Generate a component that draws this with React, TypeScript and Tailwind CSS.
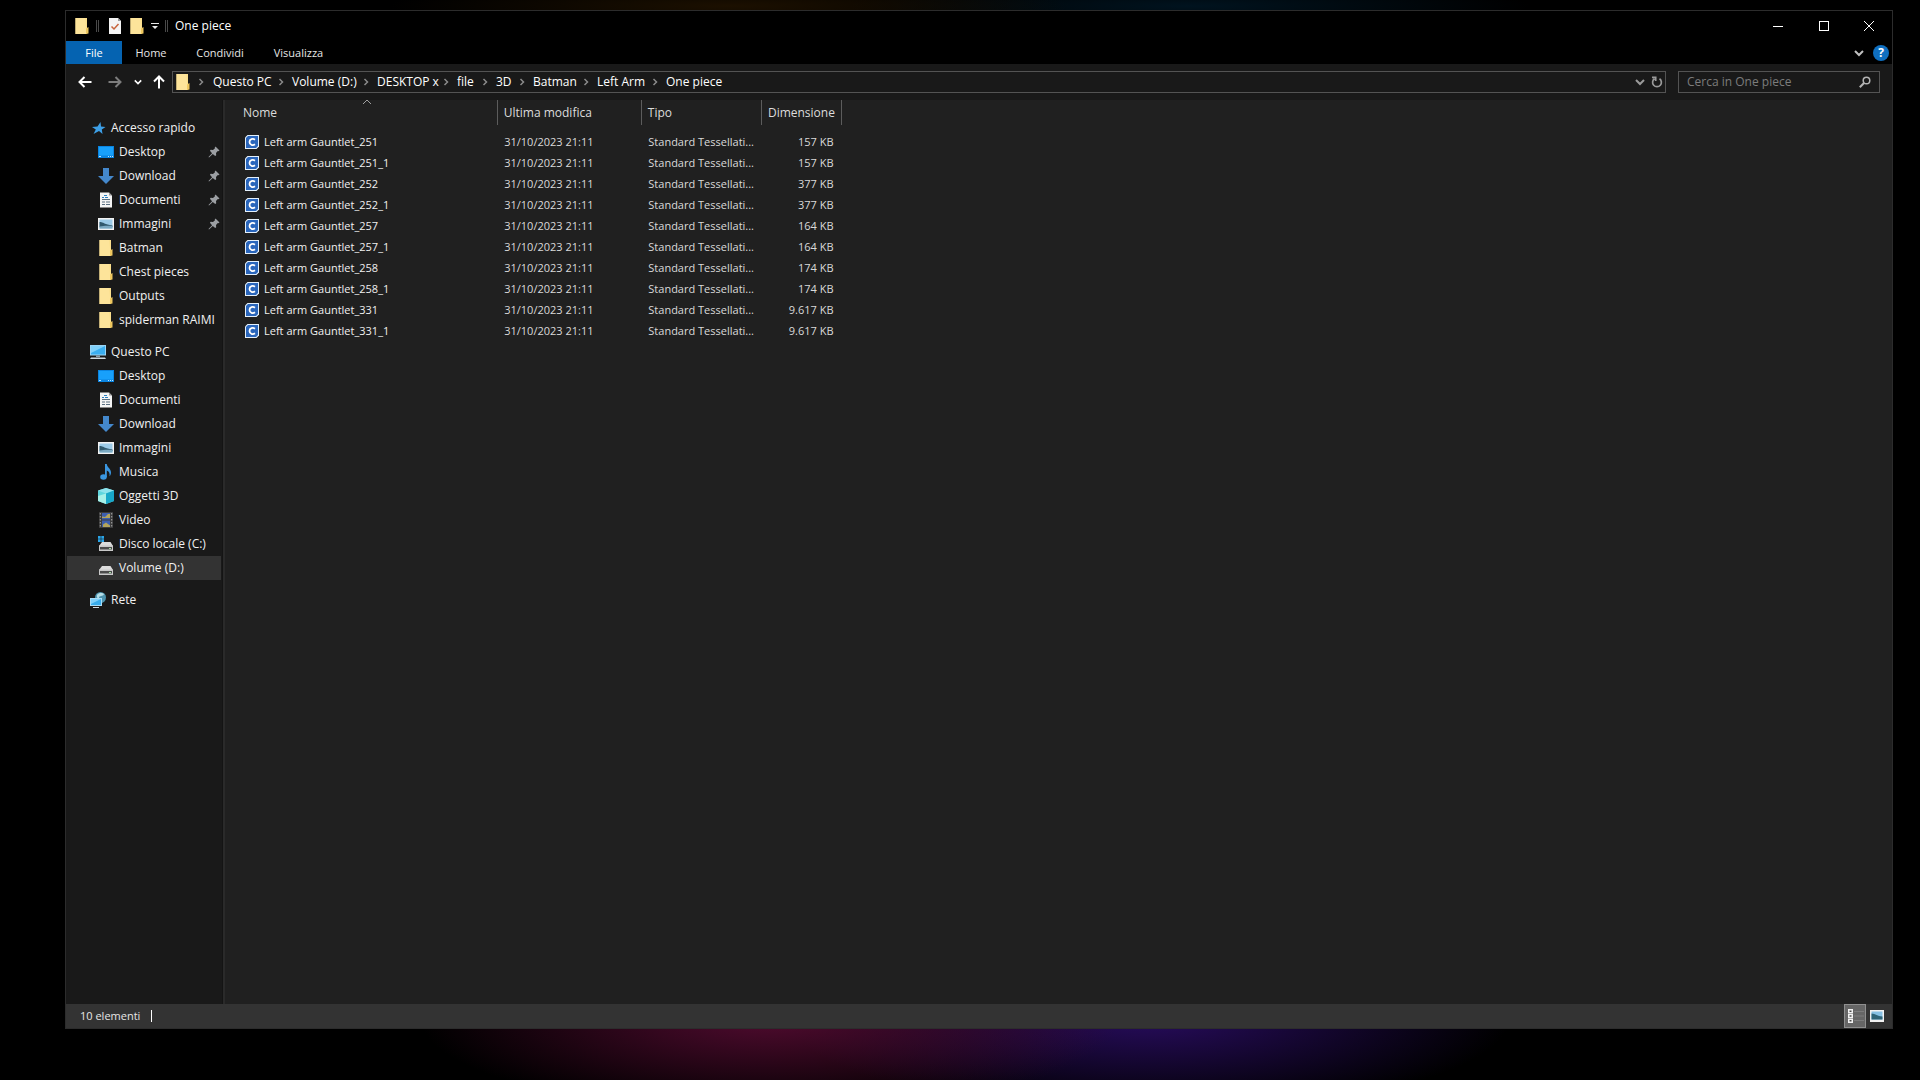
import type { ReactNode } from 'react'

type IconName =
  | 'star' | 'desktop' | 'download' | 'document' | 'picture' | 'folder' | 'pc'
  | 'music' | 'cube' | 'video' | 'diskC' | 'disk' | 'network'

interface NavItem {
  label: string
  icon: IconName
  pinned?: boolean
  selected?: boolean
}

interface NavGroup {
  title: string
  icon: IconName
  items: NavItem[]
}

const NAV: NavGroup[] = [
  {
    title: 'Accesso rapido',
    icon: 'star',
    items: [
      { label: 'Desktop', icon: 'desktop', pinned: true },
      { label: 'Download', icon: 'download', pinned: true },
      { label: 'Documenti', icon: 'document', pinned: true },
      { label: 'Immagini', icon: 'picture', pinned: true },
      { label: 'Batman', icon: 'folder' },
      { label: 'Chest pieces', icon: 'folder' },
      { label: 'Outputs', icon: 'folder' },
      { label: 'spiderman RAIMI', icon: 'folder' },
    ],
  },
  {
    title: 'Questo PC',
    icon: 'pc',
    items: [
      { label: 'Desktop', icon: 'desktop' },
      { label: 'Documenti', icon: 'document' },
      { label: 'Download', icon: 'download' },
      { label: 'Immagini', icon: 'picture' },
      { label: 'Musica', icon: 'music' },
      { label: 'Oggetti 3D', icon: 'cube' },
      { label: 'Video', icon: 'video' },
      { label: 'Disco locale (C:)', icon: 'diskC' },
      { label: 'Volume (D:)', icon: 'disk', selected: true },
    ],
  },
  { title: 'Rete', icon: 'network', items: [] },
]

const FILES = [
  { name: 'Left arm Gauntlet_251', size: '157 KB' },
  { name: 'Left arm Gauntlet_251_1', size: '157 KB' },
  { name: 'Left arm Gauntlet_252', size: '377 KB' },
  { name: 'Left arm Gauntlet_252_1', size: '377 KB' },
  { name: 'Left arm Gauntlet_257', size: '164 KB' },
  { name: 'Left arm Gauntlet_257_1', size: '164 KB' },
  { name: 'Left arm Gauntlet_258', size: '174 KB' },
  { name: 'Left arm Gauntlet_258_1', size: '174 KB' },
  { name: 'Left arm Gauntlet_331', size: '9.617 KB' },
  { name: 'Left arm Gauntlet_331_1', size: '9.617 KB' },
]

const CRUMBS = [
  { label: 'Questo PC', width: 'w-[79px]' },
  { label: 'Volume (D:)', width: 'w-[85px]' },
  { label: 'DESKTOP x', width: 'w-[80px]' },
  { label: 'file', width: 'w-[39px]' },
  { label: '3D', width: 'w-[37px]' },
  { label: 'Batman', width: 'w-[64px]' },
  { label: 'Left Arm', width: 'w-[69px]' },
  { label: 'One piece', width: 'w-[70px]' },
]

const ICONS: Record<IconName, ReactNode> = {
  star: (
    <path d="M10.500 2 11 6.500 15.500 7 11.800 9.500 12.500 14 9 11 3.500 14 5.800 9.500 2 7 7.500 6.500Z" fill="#3d9fe6" />
  ),
  desktop: (
    <>
      <path d="M0 2h16v12H0z" fill="#0a84e0" />
      <path d="M1 3h14v8.500H1z" fill="#18a0fb" />
      <path d="M1 12h2v1H1zM10 12h1v1h-1zM12 12h1v1h-1zM14 12h1v1h-1z" fill="#bfe4ff" />
    </>
  ),
  download: <path d="M5 0h6v8h5l-8 8-8-8h5z" fill="#4488cc" />,
  document: (
    <>
      <path d="M2 .5h9l3 3V15.500H2z" fill="#f4f4f4" />
      <path d="M11 .5v3h3z" fill="#9a9a9a" />
      <path d="M4 7h8v1H4zM4 9.500h3v1H4zM8 9.500h4v1H8zM4 12h3v1H4zM8 12h4v1H8z" fill="#5a6f80" />
      <path d="M6 3h3v1H6zM4 5h2v1H4zM7 5h3v1H7z" fill="#2b7fc0" />
    </>
  ),
  picture: (
    <>
      <path d="M0 2h16v12H0z" fill="#f2f2f2" />
      <path d="M1.500 3.500h13v9h-13z" fill="#9ccbe8" />
      <path d="M1.500 6c4 0 5 2.500 13 3.500v1.500h-13z" fill="#31596d" />
      <path d="M1.500 10.500c5-1 8-1 13-.5v2.500h-13z" fill="#7ba9c2" />
    </>
  ),
  folder: (
    <>
      <path d="M1.500 0h11.500v16H1.500z" fill="#fbdf8c" />
      <path d="M1.500 0h9.500L13 16H1.500z" fill="#fde49a" />
      <path d="M12 10.500 14.500 9v6.500L12 16z" fill="#eec75f" />
    </>
  ),
  pc: (
    <>
      <path d="M0 1h16v10.500H0z" fill="#9ad4f5" />
      <path d="M1 2h14v8.500H1z" fill="#3aaef0" />
      <path d="M1 2h14L1 9z" fill="#7fd0fa" />
      <path d="M6 11.500h4v1.500H6z" fill="#8aa0ad" />
      <path d="M1 13.500h14l1 1.500H0z" fill="#cfdbe2" />
    </>
  ),
  music: (
    <>
      <ellipse cx="5.500" cy="13" rx="3.300" ry="2.700" fill="#3a96e0" />
      <path d="M7 0h1.800c.2 3.500 4.200 4.500 4.200 8.500 0 1.400-.5 2.600-1.500 3.800.6-3-.6-5-2.700-5.800V13H7z" fill="#3a96e0" />
    </>
  ),
  cube: (
    <>
      <path d="M8 0 16 2.500V13L8 16 0 13V2.500z" fill="#5fd6de" />
      <path d="M8 0 16 2.500 8 5.500 0 2.500z" fill="#8fe2ec" />
      <path d="M0 13V8l8-2.500V16z" fill="#a8f0e8" />
      <path d="M16 2.500 8 5.500V16l8-3z" fill="#18a7c8" />
    </>
  ),
  video: (
    <>
      <path d="M1 0h14v16H1z" fill="#3c3c3c" />
      <path d="M4 1h8v6.500H4zM4 8.500h8V15H4z" fill="#3d5fb0" />
      <path d="M4 4.500 7 5l3-3h2v4H4zM5 12.500l3-2 4 3V15H5z" fill="#b3a45c" />
      <path d="M1.800 1h1v1.500h-1zM1.800 4h1v1.500h-1zM1.800 7h1v1.500h-1zM1.800 10h1v1.500h-1zM1.800 13h1v1.500h-1zM13.200 1h1v1.500h-1zM13.200 4h1v1.500h-1zM13.200 7h1v1.500h-1zM13.200 10h1v1.500h-1zM13.200 13h1v1.500h-1z" fill="#a8a8a8" />
    </>
  ),
  diskC: (
    <>
      <path d="M0 0h2.700v2.700H0zM3.300 0H6v2.700H3.300zM0 3.300h2.700V6H0zM3.300 3.300H6V6H3.300z" fill="#2aa5e8" />
      <path d="M4 6h8.500L15 10H1z" fill="#dcdcdc" />
      <path d="M1 9.500h14V15H1z" fill="#c9c9c9" />
      <path d="M2 11h12v2.500H2z" fill="#4c4c4c" />
      <path d="M11 12h2v1h-2z" fill="#a5dca5" />
    </>
  ),
  disk: (
    <>
      <path d="M4 6h8.500L15 10H1z" fill="#dcdcdc" />
      <path d="M1 9.500h14V15H1z" fill="#c9c9c9" />
      <path d="M2 11h12v2.500H2z" fill="#4c4c4c" />
      <path d="M11 12h2v1h-2z" fill="#a5dca5" />
    </>
  ),
  network: (
    <>
      <circle cx="10.500" cy="5.500" r="5.500" fill="#4d93ad" />
      <path d="M7 3c2-3 6-2 7-1-1 3-5 1-5 4-1 1-3-1-2-3z" fill="#b5dde6" />
      <path d="M0 6h12v8H0z" fill="#a9dcf7" />
      <path d="M1 7h10v6H1z" fill="#38acec" />
      <path d="M1 7h10L1 12z" fill="#7fd0fa" />
      <path d="M3 15h6v1H3z" fill="#cfdbe2" />
    </>
  ),
}

function Icon({ name }: { name: IconName }) {
  return (
    <svg viewBox="0 0 16 16" className="size-4 shrink-0" aria-hidden="true">
      {ICONS[name]}
    </svg>
  )
}

function Chevron({ dir, className }: { dir: 'up' | 'down' | 'right'; className: string }) {
  const paths = { up: 'M1 7 5 3 9 7', down: 'M1 3 5 7 9 3', right: 'M3.500 2 6.500 5 3.500 8' }
  return (
    <svg viewBox="0 0 10 10" className={className} fill="none" stroke="currentColor" aria-hidden="true">
      <path d={paths[dir]} />
    </svg>
  )
}

function Arrow({ className }: { className: string }) {
  return (
    <svg viewBox="0 0 14 14" className={className} fill="none" stroke="currentColor" strokeWidth="2" aria-hidden="true">
      <path d="M13.500 7H1.500M6.500 2 1.500 7l5 5" />
    </svg>
  )
}

function TitleBar() {
  return (
    <header className="flex h-[30px] items-center bg-black pl-2">
      <Icon name="folder" />
      <span className="ml-[6px] h-3 w-[3px] border-x border-[#4a4a4a]" />
      <button aria-label="Proprietà" className="ml-2">
        <svg viewBox="0 0 16 16" className="size-4" aria-hidden="true">
          <path d="M2 0h9l3 3v13H2z" fill="#f4f4f4" />
          <path d="M11 0v3h3z" fill="#9b9b9b" />
          <path d="m4.500 8.500 2.500 2.500 4.500-5" fill="none" stroke="#c8643c" strokeWidth="1.500" />
        </svg>
      </button>
      <button aria-label="Nuova cartella" className="ml-[6px]">
        <Icon name="folder" />
      </button>
      <button aria-label="Personalizza barra" className="ml-[6px]">
        <svg viewBox="0 0 8 8" className="size-2" fill="#e8e8e8" aria-hidden="true">
          <path d="M0 1h8v1H0zM1 4h6L4 7z" />
        </svg>
      </button>
      <span className="ml-[6px] h-3 w-[3px] border-x border-[#4a4a4a]" />
      <h1 className="ml-[7px] text-white">One piece</h1>
      <div className="ml-auto flex text-white">
        <button aria-label="Riduci a icona" className="flex h-[30px] w-[46px] items-center justify-center">
          <span className="h-px w-[10px] bg-white" />
        </button>
        <button aria-label="Ingrandisci" className="flex h-[30px] w-[45px] items-center justify-center">
          <span className="size-[10px] border border-white" />
        </button>
        <button aria-label="Chiudi" className="flex h-[30px] w-[46px] items-center justify-center">
          <svg viewBox="0 0 10 10" className="size-[10px]" stroke="white" aria-hidden="true">
            <path d="M0 0 10 10M10 0 0 10" />
          </svg>
        </button>
      </div>
    </header>
  )
}

function Ribbon() {
  return (
    <div className="flex h-[23px] items-center bg-black text-[11px] text-[#e6e6e6]">
      <button className="h-full w-14 bg-[#0563b1] text-white">File</button>
      <button className="w-[58px]">Home</button>
      <button className="w-20">Condividi</button>
      <button className="w-[77px]">Visualizza</button>
      <button aria-label="Espandi barra multifunzione" className="ml-auto text-[#c0c0c0]">
        <Chevron dir="down" className="size-[10px] stroke-2" />
      </button>
      <button
        aria-label="Guida"
        className="mr-[3px] ml-[9px] flex size-4 items-center justify-center rounded-full bg-[#0f6fc0] text-[12px] font-bold text-white"
      >
        ?
      </button>
    </div>
  )
}

function AddressRow() {
  return (
    <div className="flex h-9 items-center pr-3 pl-3 text-white">
      <button aria-label="Indietro"><Arrow className="size-[14px]" /></button>
      <button aria-label="Avanti" className="ml-4 text-[#7d7d7d]"><Arrow className="size-[14px] rotate-180" /></button>
      <button aria-label="Percorsi recenti" className="ml-3"><Chevron dir="down" className="size-2 stroke-2" /></button>
      <button aria-label="Su" className="ml-[10px]"><Arrow className="size-[14px] rotate-90" /></button>
      <nav aria-label="Percorso" className="ml-[6px] flex h-[22px] flex-1 items-center border border-[#535353] pl-[2px]">
        <Icon name="folder" />
        <Chevron dir="right" className="mx-[5px] size-[10px] stroke-[#8a8a8a] stroke-[1.500]" />
        <ol className="flex pl-[2px]">
          {CRUMBS.map((crumb, i) => (
            <li key={crumb.label} className={`flex items-center justify-between whitespace-nowrap ${crumb.width}`}>
              <a href="#" className="text-white">{crumb.label}</a>
              {i < CRUMBS.length - 1 && (
                <Chevron dir="right" className="mr-[6px] size-[10px] stroke-[#8a8a8a] stroke-[1.500]" />
              )}
            </li>
          ))}
        </ol>
        <button aria-label="Posizioni precedenti" className="ml-auto text-[#9a9a9a]">
          <Chevron dir="down" className="size-[10px] stroke-2" />
        </button>
        <button aria-label="Aggiorna" className="mr-[2px] ml-[6px] text-[#9a9a9a]">
          <svg viewBox="0 0 12 12" className="size-3" fill="none" stroke="currentColor" strokeWidth="1.700" aria-hidden="true">
            <path d="M8.500 2.700A4.400 4.400 0 1 1 3.500 2.700M1 1.300h3.700V5" />
          </svg>
        </button>
      </nav>
      <label className="ml-3 flex h-[22px] w-[202px] items-center border border-[#535353] pr-2 pl-2">
        <input
          type="search"
          aria-label="Cerca in One piece"
          placeholder="Cerca in One piece"
          className="min-w-0 flex-1 bg-transparent outline-none placeholder:text-[#7c7c7c]"
        />
        <svg viewBox="0 0 12 12" className="size-3" fill="none" stroke="#b4b4b4" strokeWidth="1.500" aria-hidden="true">
          <circle cx="7.500" cy="4.500" r="3.300" />
          <path d="M5 7 .8 11.200" strokeWidth="2" />
        </svg>
      </label>
    </div>
  )
}

function Pin() {
  return (
    <svg viewBox="0 0 12 12" className="mr-px ml-auto size-3 shrink-0" aria-hidden="true">
      <path d="M7.500.5 11.500 4.500 10.300 5.300 9.800 5 8 7l.2 2.300-1 .8L4.800 7.900 1 11.500.5 11 4.100 7.200 1.900 4.800l.8-1L5 4l2-1.800-.3-.5z" fill="#9c9fa3" />
    </svg>
  )
}

function Sidebar() {
  return (
    <aside className="w-[157px] shrink-0 border-r border-[#141414] pt-4 pr-px pl-px">
      {NAV.map((group) => (
        <section key={group.title} className="mb-2">
          <a href="#" className="flex h-6 items-center gap-[5px] pl-[23px]">
            <Icon name={group.icon} />
            {group.title}
          </a>
          <ul>
            {group.items.map((item) => (
              <li key={item.label}>
                <a
                  href="#"
                  className={`flex h-6 items-center gap-[5px] pl-[31px] whitespace-nowrap ${item.selected ? 'bg-[#333333]' : ''}`}
                >
                  <Icon name={item.icon} />
                  {item.label}
                  {item.pinned && <Pin />}
                </a>
              </li>
            ))}
          </ul>
        </section>
      ))}
    </aside>
  )
}

function FileIcon() {
  return (
    <svg viewBox="0 0 14 14" className="size-[14px] shrink-0" aria-hidden="true">
      <path d="M2.500 0H14v11.500L11.500 14H0V2.500z" fill="#e4f0fb" />
      <path d="M3 1H13v10L11 13H1V3z" fill="#2a66bc" />
      <path d="M10 4.700C8 3.300 4.500 3.700 4.500 7S8 10.700 10 9.300" fill="none" stroke="#fff" strokeWidth="1.800" />
    </svg>
  )
}

function FileTable() {
  return (
    <table className="w-[617px] table-fixed border-collapse text-left">
      <colgroup>
        <col className="w-[272px]" />
        <col className="w-36" />
        <col className="w-[120px]" />
        <col className="w-20" />
      </colgroup>
      <thead>
        <tr className="h-[25px] text-[#dcdcdc]">
          <th className="relative border-r border-[#5c5c5c] p-0 pl-[18px] font-normal">
            Nome
            <Chevron dir="up" className="absolute -top-[3px] left-[137px] size-[10px] text-[#a0a0a0]" />
          </th>
          <th className="border-r border-[#5c5c5c] p-0 pl-[6px] font-normal">Ultima modifica</th>
          <th className="border-r border-[#5c5c5c] p-0 pl-[6px] font-normal">Tipo</th>
          <th className="border-r border-[#5c5c5c] p-0 pl-[6px] font-normal">Dimensione</th>
        </tr>
      </thead>
      <tbody className="text-[11px] before:block before:h-[6px]">
        {FILES.map((file) => (
          <tr key={file.name} className="h-[21px] whitespace-nowrap text-[#dadada]">
            <td className="p-0 pl-5">
              <a href="#" className="flex items-center gap-[5px] text-[#f0f0f0]">
                <FileIcon />
                {file.name}
              </a>
            </td>
            <td className="p-0 pl-[7px]">31/10/2023 21:11</td>
            <td className="p-0 pl-[7px]">Standard Tessellati...</td>
            <td className="p-0 pr-2 text-right">{file.size}</td>
          </tr>
        ))}
      </tbody>
    </table>
  )
}

function StatusBar() {
  return (
    <footer className="flex h-6 items-center bg-[#333333] pr-2 pl-[14px] text-[#e6e6e6]">
      <span className="text-[11px]">10 elementi</span>
      <span className="ml-[11px] h-3 w-px bg-white" />
      <button aria-label="Dettagli" className="ml-auto flex h-6 w-[22px] items-center border border-[#8f8f8f] bg-[#666666] pl-[3px]">
        <svg viewBox="0 0 16 14" className="h-[14px] w-4" aria-hidden="true">
          <path d="M0 0h5v4.300H0zM0 4.800h5v4.300H0zM0 9.600h5V14H0z" fill="#f2f2f2" />
          <path d="M1.500 1.500h2v1.500h-2zM1.500 6.200h2v1.500h-2zM1.500 11h2v1.500h-2z" fill="#4a4a4a" />
          <path d="M6 2h10v1H6zM6 6.500h10v1H6zM6 11h10v1H6z" fill="#7c7c7c" />
        </svg>
      </button>
      <button aria-label="Icone grandi" className="ml-1">
        <svg viewBox="0 0 14 12" className="h-3 w-[14px]" aria-hidden="true">
          <path d="M0 0h14v12H0z" fill="#f2f2f2" />
          <path d="M1.500 1.500h11v8h-11z" fill="#86c0e4" />
          <path d="M1.500 3.500c4 0 6 3 11 3v3h-11z" fill="#2f6478" />
        </svg>
      </button>
    </footer>
  )
}

export default function App() {
  return (
    <div className="flex min-h-screen flex-col bg-black bg-[radial-gradient(350px_95px_at_770px_1018px,#500b2f,transparent),radial-gradient(360px_95px_at_1150px_1018px,#270c5c,transparent),radial-gradient(340px_24px_at_730px_6px,#1c1000,transparent),radial-gradient(340px_24px_at_1190px_6px,#00131f,transparent)] pt-[10px] pr-[27px] pb-[51px] pl-[65px] font-['Open_Sans','Noto_Sans',sans-serif] text-[12px] leading-4 text-[#f0f0f0]">
      <div className="flex flex-1 flex-col border border-[#2c2c2c] bg-[#191919]">
        <TitleBar />
        <Ribbon />
        <AddressRow />
        <div className="flex flex-1">
          <Sidebar />
          <main className="flex-1 border-l-2 border-[#2a2a2a] bg-[#202020]">
            <FileTable />
          </main>
        </div>
        <StatusBar />
      </div>
    </div>
  )
}
